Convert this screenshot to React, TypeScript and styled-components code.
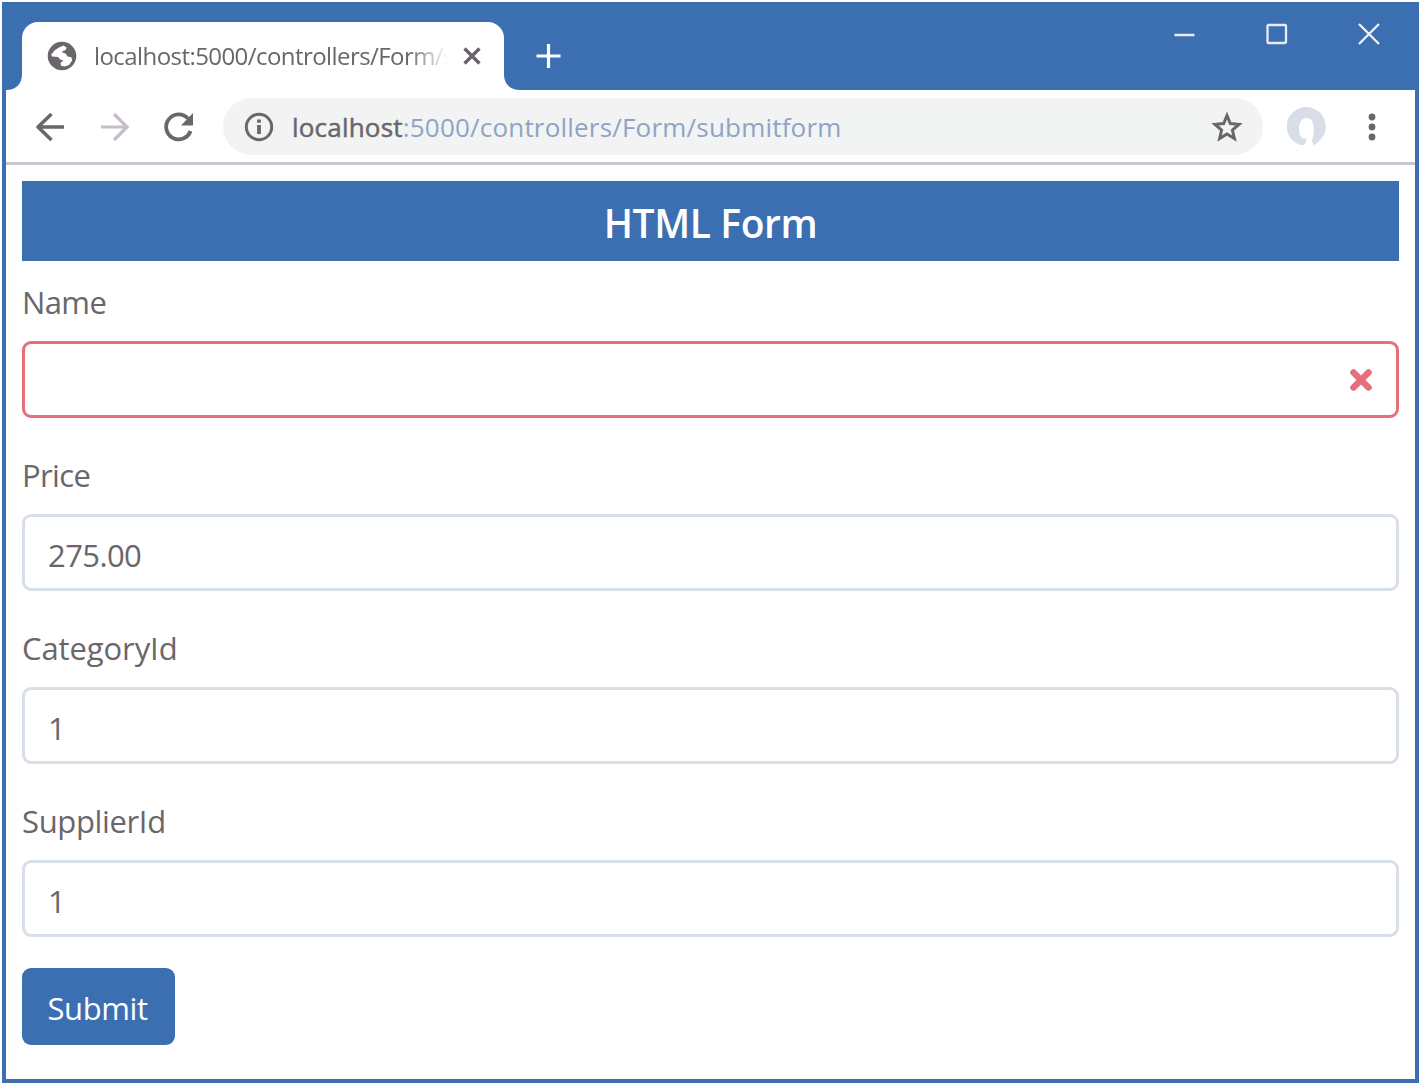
import React from "react";
import styled, { createGlobalStyle } from "styled-components";

const BLUE = "#3c6fb2";
const INK = "#6a666b";

const GlobalStyle = createGlobalStyle`
  * { box-sizing: border-box; }
  body { margin: 0; background: #fff; font-family: "Open Sans", sans-serif; }
`;

const Page = styled.div`
  width: 1421px;
  height: 1085px;
  padding: 2px;
  background: #fff;
  overflow: hidden;
`;

const Window = styled.div`
  width: 1417px;
  height: 1081px;
  display: flex;
  flex-direction: column;
  border: 4px solid ${BLUE};
  border-top: 0;
  background: #fff;
`;

const TitleBar = styled.header`
  height: 88px;
  display: flex;
  align-items: flex-end;
  background: ${BLUE};
  color: #fff;
`;

const TabFlare = styled.svg`
  width: 16px;
  height: 16px;
  display: block;
  fill: #fff;
`;

const Tab = styled.div`
  width: 482px;
  height: 68px;
  display: flex;
  align-items: center;
  padding: 0 20px 0 24px;
  border-radius: 16px 16px 0 0;
  background: #fff;
`;

const TabTitle = styled.div`
  width: 368px;
  flex: none;
  margin-left: 16px;
  white-space: nowrap;
  color: ${INK};
  font-size: 24px;
  line-height: 34px;
  letter-spacing: -0.57px;
  mask-image: linear-gradient(to right, #000 314px, transparent 354px);
`;

const Icon = styled.svg<{ $size: number; $ml?: number }>`
  width: ${(p) => p.$size}px;
  height: ${(p) => p.$size}px;
  margin-left: ${(p) => p.$ml ?? 0}px;
  display: block;
  flex: none;
  fill: none;
`;

const NewTab = styled.div`
  height: 68px;
  display: flex;
  align-items: center;
  margin-left: 15px;
`;

const WindowControls = styled.div`
  height: 88px;
  display: flex;
  gap: 68px;
  margin-left: auto;
  padding: 20px 34px 0 0;
`;

const Toolbar = styled.nav`
  height: 72px;
  display: flex;
  align-items: center;
  padding: 1px 24px 0 28px;
`;

const AddressBar = styled.div`
  width: 1040px;
  height: 57px;
  display: flex;
  flex: none;
  align-items: center;
  margin-left: 28px;
  padding: 0 20px;
  border-radius: 29px;
  background: #f2f4f4;
`;

const Address = styled.div`
  flex: 1;
  margin-left: 17px;
  color: #8fa3c6;
  font-size: 26px;
  line-height: 36px;
  letter-spacing: 0.2px;
  white-space: nowrap;
`;

const Host = styled.span`
  color: ${INK};
  -webkit-text-stroke: 0.5px ${INK};
`;

const Divider = styled.div`
  height: 3px;
  background: #cbc5cf;
`;

const Content = styled.main`
  flex: 1;
  padding: 16px 16px 0;
`;

const Heading = styled.h1`
  height: 80px;
  margin: 0 0 8px;
  background: ${BLUE};
  color: #fff;
  text-align: center;
  font-size: 39px;
  font-weight: 600;
  line-height: 83px;
  letter-spacing: -0.4px;
`;

const Field = styled.div`
  height: 173px;
`;

const Label = styled.label<{ $spacing: number }>`
  height: 72px;
  display: block;
  color: ${INK};
  font-size: 31px;
  line-height: 66px;
  letter-spacing: ${(p) => p.$spacing}px;
`;

const InputBox = styled.div<{ $invalid?: boolean }>`
  height: 77px;
  display: flex;
  align-items: center;
  justify-content: space-between;
  padding: 0 23px;
  border: 3px solid ${(p) => (p.$invalid ? "#e5707c" : "#d8dfe9")};
  border-radius: 9px;
`;

const Input = styled.input`
  width: 1200px;
  padding: 5px 0 0;
  border: 0;
  outline: 0;
  background: transparent;
  color: ${INK};
  font: 31px "Open Sans", sans-serif;
  letter-spacing: -0.6px;
`;

const Submit = styled.button`
  width: 153px;
  height: 77px;
  display: block;
  margin-top: 7px;
  padding: 2px 2px 0 0;
  border: 0;
  border-radius: 9px;
  background: ${BLUE};
  color: #fff;
  font: 31px "Open Sans", sans-serif;
  letter-spacing: -0.4px;
`;

const fields = [
  { name: "Name", value: "", invalid: true, spacing: -0.6 },
  { name: "Price", value: "275.00", spacing: -0.6 },
  { name: "CategoryId", value: "1", spacing: -0.1 },
  { name: "SupplierId", value: "1", spacing: -0.35 },
];

export default function App() {
  return (
    <Page>
      <GlobalStyle />
      <Window>
        <TitleBar>
          <TabFlare viewBox="0 0 16 16"><path d="M16 0v16H0C10 16 16 10 16 0Z" /></TabFlare>
          <Tab>
            <Icon $size={32} viewBox="0 0 32 32">
              <circle cx="16" cy="16" r="14.3" fill={INK} />
              <path fill="#fff" d="M17.500 5.500 13 7.500 8.500 10.500 5.300 14.500 6 16.500 12 17l2.500 2.800 3 .7-3 2.500.5 2.700 3.500.8 4.500-1.500 3.200-4.500-.7-3.300-3.800-.7-2.200-3-3.300-1 .5-1.500 3-1 .8-2.500Z" />
            </Icon>
            <TabTitle>localhost:5000/controllers/Form/s</TabTitle>
            <Icon $size={20} viewBox="0 0 20 20" stroke={INK} strokeWidth="3.500">
              <path d="m2.500 2.500 15 15M17.500 2.500l-15 15" />
            </Icon>
          </Tab>
          <TabFlare viewBox="0 0 16 16"><path d="M0 0v16h16C6 16 0 10 0 0Z" /></TabFlare>
          <NewTab>
            <Icon $size={26} viewBox="0 0 26 26" stroke="#fff" strokeWidth="3.200">
              <path d="M13.500 1v24M1.500 13h24" />
            </Icon>
          </NewTab>
          <WindowControls>
            <Icon $size={24} viewBox="0 0 24 24" stroke="#e8edf5" strokeWidth="2.500"><path d="M1.500 13h20" /></Icon>
            <Icon $size={24} viewBox="0 0 24 24" stroke="#e8edf5" strokeWidth="2.300"><rect x="2.500" y="3" width="18.500" height="18" rx="1" /></Icon>
            <Icon $size={24} viewBox="0 0 24 24" stroke="#f0f3f8" strokeWidth="2.300"><path d="m2 2 20 20M22 2 2 22" /></Icon>
          </WindowControls>
        </TitleBar>
        <Toolbar>
          <Icon $size={32} viewBox="0 0 32 32" stroke={INK} strokeWidth="3.600" strokeLinejoin="round">
            <path d="M30 16H4M17.500 3 4 16l13.500 13" />
          </Icon>
          <Icon $size={32} $ml={32} viewBox="0 0 32 32" stroke="#c6bdca" strokeWidth="3.200">
            <path d="M3 16h26M16 3l13 13-13 13" />
          </Icon>
          <Icon $size={32} $ml={33} viewBox="0 0 32 32">
            <path d="M27.500 20A12.500 12.500 0 1 1 25 7.500" stroke={INK} strokeWidth="3.800" />
            <path d="M30 2v12.500H18Z" fill={INK} />
          </Icon>
          <AddressBar>
            <Icon $size={32} viewBox="0 0 32 32">
              <circle cx="16" cy="16" r="12.700" stroke={INK} strokeWidth="3" />
              <path d="M16 14v9M16 8.500v3.200" stroke={INK} strokeWidth="3.800" />
            </Icon>
            <Address><Host>localhost</Host>:5000/controllers/Form/submitform</Address>
            <Icon $size={32} viewBox="0 0 32 32" stroke={INK} strokeWidth="3">
              <path d="m16 4.500 3.300 8 8.700.8-6.600 5.700 2 8.500-7.400-4.600-7.400 4.600 2-8.500L4 13.300l8.700-.8Z" />
            </Icon>
          </AddressBar>
          <Icon $size={40} $ml={24} viewBox="0 0 40 40">
            <path fill="#d9dde7" d="M13 38A19.500 19.500 0 1 1 31 35L27 38.500 25 34C28 25 28 11 19.500 11 11 11 10 26 15 31L20 32 17.500 38Z" />
          </Icon>
          <Icon $size={32} $ml={29} viewBox="0 0 32 32">
            <g fill={INK}><circle cx="16" cy="6" r="3.400" /><circle cx="16" cy="16" r="3.400" /><circle cx="16" cy="26" r="3.400" /></g>
          </Icon>
        </Toolbar>
        <Divider />
        <Content>
          <Heading>HTML Form</Heading>
          {fields.map((f) => (
            <Field key={f.name}>
              <Label htmlFor={f.name} $spacing={f.spacing}>{f.name}</Label>
              <InputBox $invalid={f.invalid}>
                <Input id={f.name} defaultValue={f.value} />
                {f.invalid && (
                  <Icon $size={24} viewBox="0 0 24 24" stroke="#e5707c" strokeWidth="6.500" strokeLinecap="round">
                    <path d="m4.500 4.500 15 15M19.500 4.500l-15 15" />
                  </Icon>
                )}
              </InputBox>
            </Field>
          ))}
          <Submit>Submit</Submit>
        </Content>
      </Window>
    </Page>
  );
}
